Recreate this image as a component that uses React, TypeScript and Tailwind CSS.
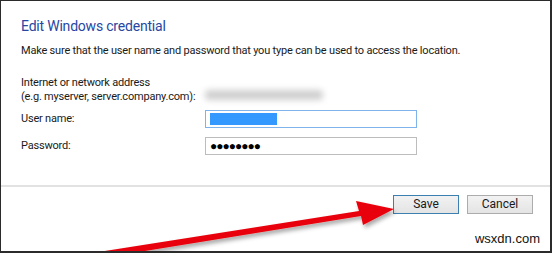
import React from 'react';

const RedArrow = () => (
    <svg className="absolute inset-0 pointer-events-none" width="552" height="253" viewBox="0 0 552 253">
        <defs>
            <filter id="shadow" x="-10%" y="-50%" width="120%" height="200%">
                <feDropShadow dx="2" dy="3" stdDeviation="2" floodColor="#000" floodOpacity="0.35" />
            </filter>
        </defs>
        <path
            d="M 72 255 L 358 210 L 355 200 L 393 208 L 362 224 L 360 215 L 76 261 Z"
            fill="#e8000b"
            filter="url(#shadow)"
        />
    </svg>
);

const App = () => {
    return (
        <div
            className="relative w-[552px] h-[253px] overflow-hidden bg-white border-t border-l border-r-2 border-b-2 border-[#2b2b2b] text-[#1a1a1a]"
            style={{ fontFamily: 'Roboto, "Open Sans", Arial, sans-serif' }}
        >
            <div className="pl-[20px] pr-[17px]">
                <h1 className="mt-[15px] text-[14px] leading-[20px] tracking-[-0.2px] text-[#2747a3]">Edit Windows credential</h1>
                <p className="mt-[8px] text-[11px] leading-[14px] tracking-[-0.2px] whitespace-nowrap">
                    Make sure that the user name and password that you type can be used to access the location.
                </p>

                <div className="mt-[18px] grid grid-cols-[184px_212px] text-[11px] leading-[14px] tracking-[-0.2px]">
                    <div className="whitespace-nowrap">
                        <div>Internet or network address</div>
                        <div>(e.g. myserver, server.company.com):</div>
                    </div>
                    <div className="flex items-end pb-[4px]">
                        <div className="h-[10px] w-[118px] rounded-sm bg-[#cfcfcf] blur-[3px]"></div>
                    </div>

                    <div className="mt-[6px] flex items-center h-[18px]">User name:</div>
                    <div className="mt-[6px] h-[18px] border border-[#7eb4ea] flex items-center px-[4px]">
                        <div className="h-[12px] w-[67px] bg-[#3399ff]"></div>
                    </div>

                    <div className="mt-[9px] flex items-center h-[18px]">Password:</div>
                    <div className="mt-[9px] h-[18px] border border-[#bdbdbd] flex items-center px-[4px] text-[12px] tracking-[-1px] text-black">
                        ●●●●●●●●
                    </div>
                </div>
            </div>

            <div className="mt-[30px] h-[2px] bg-[#e2e2e2]"></div>

            <div className="flex justify-end gap-[8px] pr-[17px] pt-[8px]">
                <button className="w-[66px] h-[19px] border border-[#3c7fb1] bg-gradient-to-b from-[#f2f2f2] to-[#e4e4e4] text-[12px] leading-[17px] text-[#1a1a1a]">
                    Save
                </button>
                <button className="w-[66px] h-[19px] border border-[#acacac] bg-gradient-to-b from-[#f2f2f2] to-[#e4e4e4] text-[12px] leading-[17px] text-[#1a1a1a]">
                    Cancel
                </button>
            </div>

            <div
                className="absolute right-[10px] bottom-[4px] text-[13px] leading-[16px] text-[#111]"
                style={{ fontFamily: '"Liberation Sans", Arial, sans-serif' }}
            >
                wsxdn.com
            </div>

            <RedArrow />
        </div>
    );
};

export default App;
